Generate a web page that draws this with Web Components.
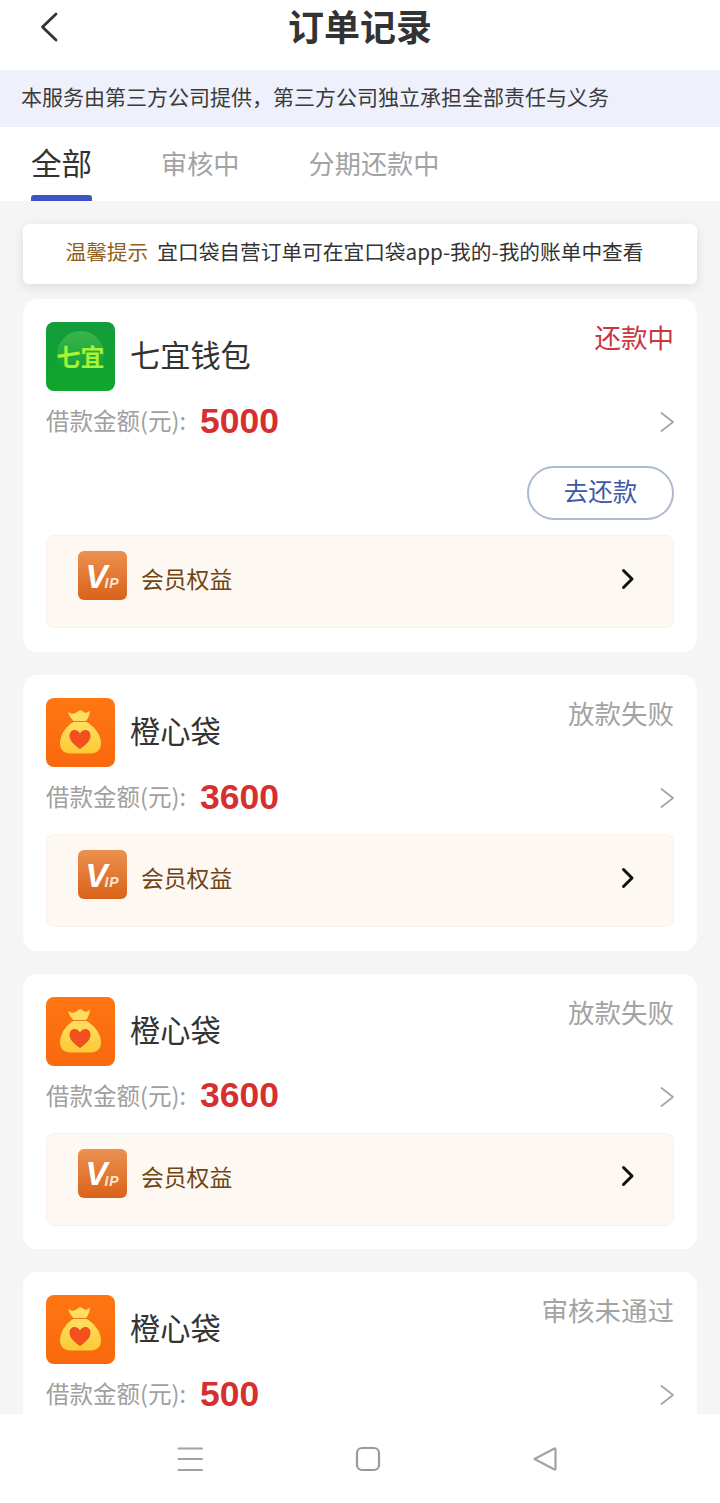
<!DOCTYPE html>
<html lang="zh">
<head>
<meta charset="utf-8">
<title>订单记录</title>
<style>
html,body{margin:0;padding:0;height:100%;}
body{font-family:"Noto Sans CJK SC","Liberation Sans",sans-serif;background:#f5f5f5;color:#333;}
#page{display:flex;flex-direction:column;height:100vh;overflow:hidden;}
#list{flex:1;min-height:0;overflow:hidden;display:flex;flex-direction:column;gap:23px;padding:23px 23px 0;}
</style>
</head>
<body>
<div id="page">
    <app-header>订单记录</app-header>
    <notice-bar>本服务由第三方公司提供，第三方公司独立承担全部责任与义务</notice-bar>
    <tab-bar></tab-bar>
    <div id="list">
        <tip-bar label="温馨提示">宜口袋自营订单可在宜口袋app-我的-我的账单中查看</tip-bar>
        <order-card name="七宜钱包" status="还款中" amount="5000" logo="qiyi" alert>
            <pay-button slot="action">去还款</pay-button>
            <vip-row>会员权益</vip-row>
        </order-card>
        <order-card name="橙心袋" status="放款失败" amount="3600" logo="bag">
            <vip-row>会员权益</vip-row>
        </order-card>
        <order-card name="橙心袋" status="放款失败" amount="3600" logo="bag">
            <vip-row>会员权益</vip-row>
        </order-card>
        <order-card name="橙心袋" status="审核未通过" amount="500" logo="bag"></order-card>
    </div>
    <nav-bar></nav-bar>
</div>

<script>
class AppHeader extends HTMLElement{
    constructor(){
        super();
        this.attachShadow({mode:'open'});
        this.shadowRoot.innerHTML=`
        <style>
            :host{display:flex;flex:none;height:70px;background:#fff;position:relative;justify-content:center;}
            h1{margin:0;font-size:36px;line-height:50px;font-weight:700;color:#333;}
            svg{position:absolute;left:38px;top:11px;}
        </style>
        <svg width="22" height="32" viewBox="0 0 22 32"><path d="M18 3 L4.500 16 L18 29" fill="none" stroke="#333" stroke-width="2.800" stroke-linecap="round" stroke-linejoin="round"/></svg>
        <h1><slot></slot></h1>`;
    }
}
class NoticeBar extends HTMLElement{
    constructor(){
        super();
        this.attachShadow({mode:'open'});
        this.shadowRoot.innerHTML=`
        <style>
            :host{display:flex;flex:none;align-items:center;box-sizing:border-box;height:57px;padding:0 0 6px 21px;background:#eef0fb;color:#3a3a3a;font-size:21px;}
        </style>
        <slot></slot>`;
    }
}
class TabBar extends HTMLElement{
    constructor(){
        super();
        this.attachShadow({mode:'open'});
        this.shadowRoot.innerHTML=`
        <style>
            :host{display:flex;flex:none;height:74px;background:#fff;padding-left:31px;gap:69px;box-sizing:border-box;}
            div{position:relative;font-size:26.200px;color:#a3a3a3;line-height:72px;}
            .on{font-size:30.500px;color:#333;line-height:70px;height:74px;}
            .on::after{content:'';position:absolute;left:0;right:0;bottom:0;height:6px;border-radius:3px 3px 0 0;background:#3c55c4;}
        </style>
        <div class="on">全部</div><div>审核中</div><div>分期还款中</div>`;
    }
}
class TipBar extends HTMLElement{
    constructor(){
        super();
        this.attachShadow({mode:'open'});
        this.shadowRoot.innerHTML=`
        <style>
            :host{display:flex;flex:none;align-items:center;justify-content:center;gap:9px;box-sizing:border-box;height:60px;padding:0 11px 6px 0;margin-bottom:-8px;background:#fff;border-radius:6px;box-shadow:0 3px 12px rgba(0,0,0,.1);font-size:20.700px;color:#333;}
            b{font-weight:400;color:#8f5f22;}
        </style>
        <b></b><span><slot></slot></span>`;
    }
    connectedCallback(){
        this.shadowRoot.querySelector('b').textContent=this.getAttribute('label');
    }
}
class BrandLogo extends HTMLElement{
    static get observedAttributes(){
        return ['type'];
    }
    constructor(){
        super();
        this.attachShadow({mode:'open'});
    }
    attributeChangedCallback(){
        const style=`
        <style>
            :host{display:block;flex:none;width:69px;height:69px;border-radius:8px;overflow:hidden;position:relative;}
            .qiyi{height:100%;background:linear-gradient(#139c3c,#10a62c);display:flex;align-items:center;justify-content:center;}
            .qiyi i{position:absolute;left:11px;top:9px;width:47px;height:47px;border-radius:50%;background:linear-gradient(#3bb44c,#12a433 80%);}
            .qiyi span{position:relative;font-size:24px;font-weight:700;color:#a9f234;white-space:nowrap;margin-top:-2px;}
            svg{display:block;}
        </style>`;
        if(this.getAttribute('type')==='qiyi'){
            this.shadowRoot.innerHTML=style+`<div class="qiyi"><i></i><span>七宜</span></div>`;
        }else{
            this.shadowRoot.innerHTML=style+`
            <svg width="69" height="69" viewBox="0 0 69 69">
                <defs>
                    <linearGradient id="bg" x1="0" y1="0" x2="0" y2="1"><stop offset="0" stop-color="#ff7612"/><stop offset="1" stop-color="#f9680e"/></linearGradient>
                    <linearGradient id="sack" x1="0" y1="0" x2="0" y2="1"><stop offset="0" stop-color="#ffdf62"/><stop offset="1" stop-color="#fbc935"/></linearGradient>
                </defs>
                <rect width="69" height="69" fill="url(#bg)"/>
                <path d="M22 14 Q27 17.500 31 14 Q34 11 37 13.500 Q40 16.500 44 12.500 Q43.500 19 40 23 H27.500 Q23.500 19.500 22 14 Z" fill="#ffdf62"/>
                <path d="M27.500 24 H40.500 C46 27 55 35 55 45.500 C55 52 50.500 55.500 45 55.500 H24 C18.500 55.500 14 52 14 45.500 C14 35 22 27 27.500 24 Z" fill="url(#sack)"/>
                <path d="M34 51 C27 46 23.500 42.500 23.500 37.500 C23.500 31 31.500 30 34 35.500 C36.500 30 44.500 31 44.500 37.500 C44.500 42.500 41 46 34 51 Z" fill="#f2501c"/>
            </svg>`;
        }
    }
}
class PayButton extends HTMLElement{
    constructor(){
        super();
        this.attachShadow({mode:'open'});
        this.shadowRoot.innerHTML=`
        <style>
            :host{display:flex;align-items:center;justify-content:center;box-sizing:border-box;width:147px;height:54px;margin:17px 0 0 auto;padding-bottom:6px;border:2px solid #aebad2;border-radius:27px;color:#3f58a3;font-size:24.500px;}
        </style>
        <slot></slot>`;
    }
}
class VipRow extends HTMLElement{
    constructor(){
        super();
        this.attachShadow({mode:'open'});
        this.shadowRoot.innerHTML=`
        <style>
            :host{display:flex;align-items:center;box-sizing:border-box;height:93px;padding-left:31px;background:#fef8f3;border:1px solid #fbf1ea;border-radius:8px;color:#6e4414;font-size:22.800px;}
            .icon{flex:none;display:flex;align-items:center;justify-content:center;width:49px;height:49px;margin-top:-12px;border-radius:6px;background:linear-gradient(#ec9150,#d9621a);color:#fff;font-family:"Liberation Sans",sans-serif;font-style:italic;font-weight:700;line-height:1;overflow:hidden;}
            .icon b{font-size:33px;letter-spacing:-3px;margin-top:1px;}
            .icon i{font-size:14px;letter-spacing:1px;margin-top:15px;color:#fde5d2;}
            .text{margin:0 0 6px 14px;flex:1;}
            svg{flex:none;margin:-6px 37px 0 0;}
        </style>
        <div class="icon"><b>V</b><i>IP</i></div>
        <div class="text"><slot></slot></div>
        <svg width="16" height="24" viewBox="0 0 16 24"><path d="M3.500 3.500 L12 12 L3.500 20.500" fill="none" stroke="#111" stroke-width="3" stroke-linecap="round" stroke-linejoin="round"/></svg>`;
    }
}
class OrderCard extends HTMLElement{
    constructor(){
        super();
        this.attachShadow({mode:'open'});
        this.shadowRoot.innerHTML=`
        <style>
            :host{display:block;flex:none;box-sizing:border-box;padding:23px 23px 23.500px;background:#fff;border-radius:14px;}
            :host([alert]){padding-bottom:24px;}
            .top{display:flex;height:69px;}
            .name{margin:-2px 0 0 15px;font-size:30.200px;line-height:69px;color:#333;flex:1;}
            .status{font-size:26.500px;line-height:32px;margin-top:-1px;color:#a3a3a3;}
            :host([alert]) .status{color:#c9373f;}
            .amount{display:flex;align-items:center;height:54px;margin-top:4px;}
            .label{font-size:23.500px;color:#a0a0a0;margin-bottom:4px;}
            .num{margin:0 0 2px 14px;font:700 35.500px "Liberation Sans",sans-serif;color:#d5302f;flex:1;}
            ::slotted(vip-row){margin-top:9px;}
            .vip{display:block;}
            :host([alert]) ::slotted(vip-row){margin-top:15px;}
        </style>
        <div class="top"><brand-logo></brand-logo><div class="name"></div><div class="status"></div></div>
        <div class="amount">
            <span class="label">借款金额(元):</span><span class="num"></span>
            <svg width="16" height="24" viewBox="0 0 16 24"><path d="M3.500 3 L15 12 L3.500 21" fill="none" stroke="#a6a6a6" stroke-width="1.800" stroke-linecap="round" stroke-linejoin="round"/></svg>
        </div>
        <slot name="action"></slot>
        <slot class="vip"></slot>`;
    }
    connectedCallback(){
        const root=this.shadowRoot;
        root.querySelector('brand-logo').setAttribute('type',this.getAttribute('logo'));
        root.querySelector('.name').textContent=this.getAttribute('name');
        root.querySelector('.status').textContent=this.getAttribute('status');
        root.querySelector('.num').textContent=this.getAttribute('amount');
    }
}
class NavBar extends HTMLElement{
    constructor(){
        super();
        this.attachShadow({mode:'open'});
        this.shadowRoot.innerHTML=`
        <style>
            :host{display:block;flex:none;height:89px;background:#fff;position:relative;z-index:1;}
            .keys{display:flex;padding:32px 0 0 177px;gap:151px;}
            svg{display:block;flex:none;}
        </style>
        <div class="keys">
            <svg width="27" height="26" viewBox="0 0 27 26"><path d="M1.500 2.500 H25 M1.500 13 H25 M1.500 24 H25" stroke="#a2a2a2" stroke-width="2.200" stroke-linecap="round"/></svg>
            <svg width="26" height="26" viewBox="0 0 26 26"><rect x="2" y="2" width="22" height="22" rx="5" fill="none" stroke="#9a9a9a" stroke-width="2.200"/></svg>
            <svg width="26" height="26" viewBox="0 0 26 26"><path d="M2.500 13 L22.500 2.500 Q23.500 2 23.500 3.500 V22.500 Q23.500 24 22.500 23.500 Z" fill="none" stroke="#a2a2a2" stroke-width="2.200" stroke-linejoin="round"/></svg>
        </div>`;
    }
}
customElements.define('app-header',AppHeader);
customElements.define('notice-bar',NoticeBar);
customElements.define('tab-bar',TabBar);
customElements.define('tip-bar',TipBar);
customElements.define('brand-logo',BrandLogo);
customElements.define('pay-button',PayButton);
customElements.define('vip-row',VipRow);
customElements.define('order-card',OrderCard);
customElements.define('nav-bar',NavBar);
</script>
</body>
</html>
